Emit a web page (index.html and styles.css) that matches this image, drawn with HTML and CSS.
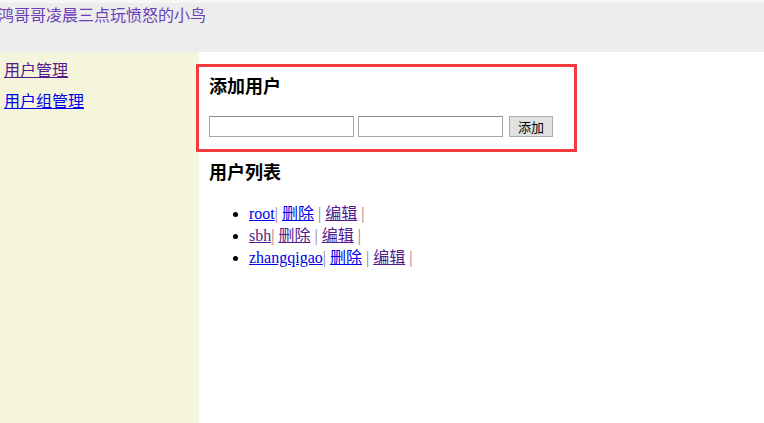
FILE: index.html
```html
<!DOCTYPE html>
<html lang="zh-CN">
<head>
    <meta charset="UTF-8">
    <title>用户管理</title>
    <link rel="stylesheet" href="styles.css">
</head>
<body>
    <div class="header">鸿哥哥凌晨三点玩愤怒的小鸟</div>
    <div class="layout">
        <div class="sidebar">
            <ul>
                <li><a href="#" class="visited">用户管理</a></li>
                <li><a href="#">用户组管理</a></li>
            </ul>
        </div>
        <div class="content">
            <div class="add-box">
                <h3>添加用户</h3>
                <form class="add-form">
                    <input type="text">
                    <input type="text">
                    <button type="button">添加</button>
                </form>
            </div>
            <h3 class="list-title">用户列表</h3>
            <ul class="user-list">
                <li><a href="#">root</a><span class="sep">|</span> <a href="#">删除</a> <span class="sep">|</span> <a href="#" class="visited">编辑</a> <span class="sep">|</span></li>
                <li><a href="#" class="visited">sbh</a><span class="sep">|</span> <a href="#" class="visited">删除</a> <span class="sep">|</span> <a href="#" class="visited">编辑</a> <span class="sep">|</span></li>
                <li><a href="#">zhangqigao</a><span class="sep">|</span> <a href="#">删除</a> <span class="sep">|</span> <a href="#" class="visited">编辑</a> <span class="sep">|</span></li>
            </ul>
        </div>
    </div>
</body>
</html>
```

FILE: styles.css
```css
body {
    margin: 0;
    font-family: "Liberation Serif", "Noto Sans CJK SC", serif;
    font-size: 16px;
    color: #000;
}

a {
    color: #0000ee;
}

a.visited {
    color: #551a8b;
}

.header {
    height: 49px;
    border-top: 3px solid #f6f6f6;
    background: #ededed;
    color: #6b3fb8;
    font-family: "Noto Sans CJK SC", sans-serif;
    font-size: 16px;
    line-height: 22px;
    text-indent: -2px;
}

.layout {
    display: flex;
    min-height: calc(100vh - 52px);
}

.sidebar {
    width: 199px;
    flex-shrink: 0;
    background: #f5f5dc;
}

.sidebar ul {
    list-style: none;
    margin: 0;
    padding: 2px 0 0 4px;
    font-family: "Noto Sans CJK SC", sans-serif;
    font-size: 16px;
}

.sidebar li {
    line-height: 31px;
}

.content {
    flex: 1;
}

/* red marked block */
.add-box {
    width: 375px;
    height: 82px;
    margin-top: 15px;
    padding: 8px 10px 0;
    box-sizing: border-box;
    outline: 3px solid #f23b3b;
}

.add-box h3,
.list-title {
    margin: 0;
    font-family: "Noto Sans CJK SC", sans-serif;
    font-size: 18px;
    font-weight: bold;
    line-height: 20px;
}

.add-form {
    margin-top: 21px;
    display: flex;
    align-items: center;
}

.add-form input {
    width: 145px;
    height: 21px;
    box-sizing: border-box;
    margin: 0 4px 0 0;
    padding: 1px 2px;
    border: 1px solid #a5a5a5;
    border-top-color: #8c8c8c;
}

.add-form input + input {
    margin-right: 6px;
}

.add-form button {
    width: 44px;
    height: 21px;
    padding: 0;
    background: #e1e1e1;
    border: 1px solid #adadad;
    font-family: "Noto Sans CJK SC", sans-serif;
    font-size: 13px;
    color: #000;
}

.list-title {
    margin-top: 12px;
    padding-left: 10px;
}

.user-list {
    margin: 22px 0 0;
    padding-left: 50px;
    line-height: 22px;
}

.user-list .sep {
    color: #8a7a8a;
}
```
